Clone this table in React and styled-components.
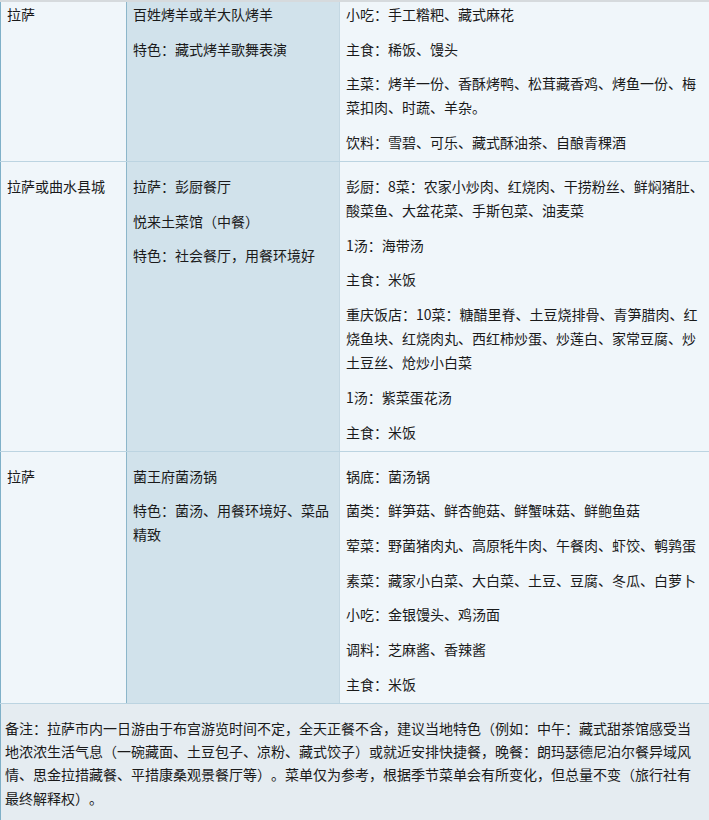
import React from "react";
import styled, { createGlobalStyle } from "styled-components";

const GlobalStyle = createGlobalStyle`
  html, body {
    margin: 0;
    padding: 0;
    background: #ffffff;
  }
  body {
    font-family: "Noto Sans CJK SC", "Liberation Sans", sans-serif;
    font-size: 14px;
    color: #1a1a1a;
    text-spacing-trim: space-all;
  }
`;

const rows = [
  {
    place: "拉萨",
    venue: ["百姓烤羊或羊大队烤羊", "特色：藏式烤羊歌舞表演"],
    menu: [
      "小吃：手工糌粑、藏式麻花",
      "主食：稀饭、馒头",
      "主菜：烤羊一份、香酥烤鸭、松茸藏香鸡、烤鱼一份、梅菜扣肉、时蔬、羊杂。",
      "饮料：雪碧、可乐、藏式酥油茶、自酿青稞酒",
    ],
  },
  {
    place: "拉萨或曲水县城",
    venue: ["拉萨：彭厨餐厅", "悦来土菜馆（中餐）", "特色：社会餐厅，用餐环境好"],
    menu: [
      "彭厨：8菜：农家小炒肉、红烧肉、干捞粉丝、鲜焖猪肚、酸菜鱼、大盆花菜、手斯包菜、油麦菜",
      "1汤：海带汤",
      "主食：米饭",
      "重庆饭店：10菜：糖醋里脊、土豆烧排骨、青笋腊肉、红烧鱼块、红烧肉丸、西红柿炒蛋、炒莲白、家常豆腐、炒土豆丝、炝炒小白菜",
      "1汤：紫菜蛋花汤",
      "主食：米饭",
    ],
  },
  {
    place: "拉萨",
    venue: ["菌王府菌汤锅", "特色：菌汤、用餐环境好、菜品精致"],
    menu: [
      "锅底：菌汤锅",
      "菌类：鲜笋菇、鲜杏鲍菇、鲜蟹味菇、鲜鲍鱼菇",
      "荤菜：野菌猪肉丸、高原牦牛肉、午餐肉、虾饺、鹌鹑蛋",
      "素菜：藏家小白菜、大白菜、土豆、豆腐、冬瓜、白萝卜",
      "小吃：金银馒头、鸡汤面",
      "调料：芝麻酱、香辣酱",
      "主食：米饭",
    ],
  },
];

const note =
  "备注：拉萨市内一日游由于布宫游览时间不定，全天正餐不含，建议当地特色（例如：中午：藏式甜茶馆感受当地浓浓生活气息（一碗藏面、土豆包子、凉粉、藏式饺子）或就近安排快捷餐，晚餐：朗玛瑟德尼泊尔餐异域风情、思金拉措藏餐、平措康桑观景餐厅等）。菜单仅为参考，根据季节菜单会有所变化，但总量不变（旅行社有最终解释权）。";

function App() {
  return (
    <>
      <GlobalStyle />
      <Table>
        {rows.map((row, i) => (
          <Row key={i}>
            <PlaceCell $first={i === 0}>
              <Para>{row.place}</Para>
            </PlaceCell>
            <VenueCell $first={i === 0}>
              {row.venue.map((t) => (
                <Para key={t}>{t}</Para>
              ))}
            </VenueCell>
            <MenuCell $first={i === 0}>
              {row.menu.map((t, j) => (
                <Para key={j}>{t}</Para>
              ))}
            </MenuCell>
          </Row>
        ))}
        <Note>{note}</Note>
      </Table>
    </>
  );
}

const Table = styled.div`
  width: 709px;
  border-top: 2px solid #d6dadd;
  box-sizing: border-box;
`;

const Row = styled.div`
  display: grid;
  grid-template-columns: 127px 213px 369px;
  border-bottom: 1px solid #bcd4e1;
`;

const Cell = styled.div`
  box-sizing: border-box;
  padding: ${(p) => (p.$first ? "0" : "12px")} 4px 7px 6px;
  line-height: 24px;
`;

const PlaceCell = styled(Cell)`
  background: #f0f6fa;
  border-left: 1px solid #7fb0c8;
  border-right: 1px solid #8cb6ca;
`;

const VenueCell = styled(Cell)`
  background: #d1e2eb;
  border-right: 1px solid #c4d8e3;
`;

const MenuCell = styled(Cell)`
  background: #f0f6fa;
`;

const Para = styled.p`
  margin: 0 0 10.7px;
  &:last-child {
    margin-bottom: 0;
  }
`;

const Note = styled.div`
  background: #e5ecf1;
  border-left: 1px solid #7fb0c8;
  padding: 13px 8px 14px 4px;
  line-height: 23.3px;
  min-height: 116px;
  box-sizing: border-box;
`;

export default App;
